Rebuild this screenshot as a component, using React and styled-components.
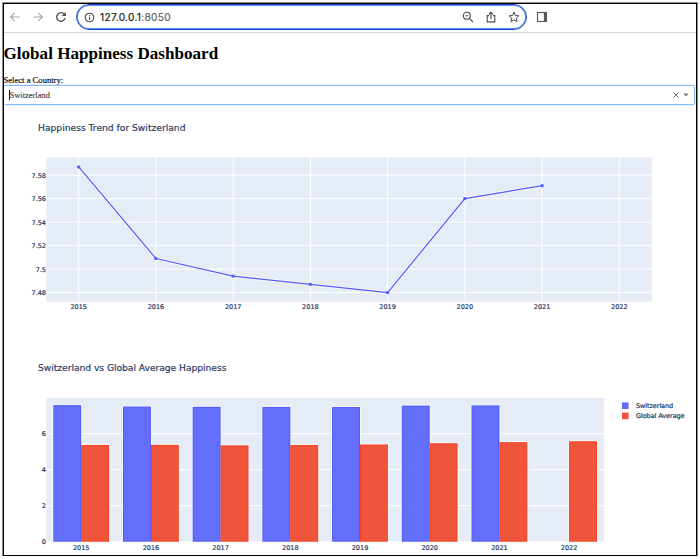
import React from 'react';
import styled, { createGlobalStyle } from 'styled-components';

const GlobalStyle = createGlobalStyle`
  body {
    margin: 0;
    background: #fdfdfd;
  }
`

const Frame = styled.div`
  box-sizing: border-box;
  display: flex;
  flex-direction: column;
  width: 694px;
  height: 553px;
  margin: 3px 0 0 3px;
  border: 1px solid #000;
  box-shadow: 0 0 0 1px #8c8c8c;
  background: #fff;
  overflow: hidden;
`

const Page = styled.div`
  display: flow-root;
`

const Toolbar = styled.div`
  box-sizing: border-box;
  display: flex;
  align-items: flex-start;
  flex: none;
  height: 29px;
  border-bottom: 1px solid #d6d8da;
`

const NavButtons = styled.div`
  display: flex;
  align-items: center;
  gap: 10.9px;
  height: 26px;
  width: 67px;
  padding-left: 5px;
`

const AddressBar = styled.div`
  box-sizing: border-box;
  display: flex;
  align-items: center;
  width: 451px;
  height: 26px;
  padding: 0 6px 0 7px;
  border: 1px solid #1a50d0;
  border-radius: 13px;
  box-shadow: inset 0 0 0 1px #5f8bea;
`

const Url = styled.div`
  flex: 1;
  margin-left: 5px;
  font-family: Inter, "Liberation Sans", sans-serif;
  font-size: 10.2px;
  line-height: 14px;
  letter-spacing: 0.28px;
  color: #5c5f63;
  -webkit-text-stroke: 0.2px;

  b {
    font-weight: 400;
    color: #1c1d20;
  }
`

const BarActions = styled.div`
  display: flex;
  align-items: center;
  gap: 10.9px;
`

const SideButton = styled.div`
  display: flex;
  align-items: center;
  height: 26px;
  margin-left: 9px;
`

const Title = styled.h1`
  margin: 11px 0 0 -0.5px;
  font-family: "Liberation Serif", serif;
  font-size: 17.1px;
  line-height: 20px;
  font-weight: bold;
  white-space: nowrap;
  color: #000;
`

const Label = styled.label`
  display: block;
  margin: 11px 0 0 -0.5px;
  font-family: "Liberation Serif", serif;
  font-size: 8.6px;
  line-height: 10px;
  color: #000;
  -webkit-text-stroke: 0.15px;
`

const Select = styled.div`
  box-sizing: border-box;
  display: flex;
  align-items: center;
  width: 691px;
  height: 20px;
  padding: 0 5px;
  border: 1px solid #85bafa;
  border-left: none;
  border-radius: 2px;
  box-shadow: 0 0 0 0.5px #d4e7fd;
`

const SelectValue = styled.div`
  flex: 1;
  display: flex;
  align-items: center;
  padding-bottom: 1px;
  font-family: "Liberation Serif", serif;
  font-size: 8.5px;
  color: #333;
  -webkit-text-stroke: 0.1px;
`

const Caret = styled.span`
  width: 1px;
  height: 10px;
  margin-right: -0.6px;
  background: #222;
`

const SelectIcons = styled.div`
  display: flex;
  align-items: center;
  gap: 4px;
`

const Chart = styled.svg`
  display: block;
  flex: none;
`

const ChartText = styled.text`
  font-family: "DejaVu Sans", Verdana, sans-serif;
  font-size: ${props => props.$size || 6.5}px;
  fill: #1e3560;
  stroke: #1e3560;
  stroke-width: ${props => props.$stroke || 0.2}px;
`

const years = [2015, 2016, 2017, 2018, 2019, 2020, 2021, 2022];
const country = [7.587, 7.509, 7.494, 7.487, 7.48, 7.56, 7.571];
const average = [5.37, 5.38, 5.35, 5.37, 5.4, 5.47, 5.53, 5.58];

const Icon = ({ size = 12, color = '#47494d', width = 1.1, children }) => (
  <svg width={size} height={size} viewBox="0 0 12 12" fill="none" stroke={color} strokeWidth={width}>
    {children}
  </svg>
)

const Browser = () => (
  <Toolbar>
    <NavButtons>
      <Icon color="#a3a5a8"><path d="M10.6 6H1.8M5.8 1.8L1.6 6l4.2 4.2" /></Icon>
      <Icon color="#a3a5a8"><path d="M1.4 6h8.8M6.2 1.8L10.4 6l-4.2 4.2" /></Icon>
      <Icon width={1.3}>
        <path d="M10.1 7.3A4.3 4.3 0 1 1 9.3 3.2L10.3 4.3" />
        <path d="M10.9 1.1V5.1H6.9z" fill="#47494d" stroke="none" />
      </Icon>
    </NavButtons>
    <AddressBar>
      <Icon size={11} width={1.2}>
        <circle cx="6" cy="6" r="4.7" />
        <path d="M6 5.3V8.7M6 3.2V4.4" />
      </Icon>
      <Url><b>127.0.0.1</b>:8050</Url>
      <BarActions>
        <Icon>
          <circle cx="4.8" cy="4.8" r="3.5" />
          <path d="M3.3 4.8h3M7.4 7.4L11 11" />
        </Icon>
        <Icon>
          <path d="M4 4.6H2.2V10.9H9.8V4.6H8M6 7.9V1.5M3.9 3.4L6 1.3l2.1 2.1" />
        </Icon>
        <Icon width={1}>
          <path d="M6 1.2L7.35 4.5l3.6.3-2.7 2.35.83 3.5L6 8.75 2.92 10.65l.83-3.5L1.05 4.8l3.6-.3z" />
        </Icon>
      </BarActions>
    </AddressBar>
    <SideButton>
      <Icon color="#55585e">
        <rect x="1.5" y="1.5" width="9" height="9" />
        <path d="M7.9 1h3.1v10H7.9z" fill="#55585e" stroke="none" />
      </Icon>
    </SideButton>
  </Toolbar>
)

const TrendChart = () => {
  const x = i => 74.7 + i * 77.23;
  const y = v => 188.6 - (v - 7.48) * 1175;
  const points = country.map((v, i) => `${x(i)},${y(v)}`).join(' ');
  return (
    <Chart width="692" height="239" viewBox="0 1 692 239">
      <ChartText $size={9.2} $stroke={0.15} x="34" y="26.5" textLength="147.5">Happiness Trend for Switzerland</ChartText>
      <rect x="42.3" y="53.4" width="605.6" height="144.2" fill="#e5ecf6" />
      {years.map((year, i) => (
        <g key={year}>
          <line x1={x(i)} x2={x(i)} y1="53.4" y2="197.6" stroke="#fff" strokeWidth="1" />
          <ChartText x={x(i)} y="205.1" textAnchor="middle">{year}</ChartText>
        </g>
      ))}
      {[7.58, 7.56, 7.54, 7.52, 7.5, 7.48].map(v => (
        <g key={v}>
          <line x1="42.3" x2="647.9" y1={y(v)} y2={y(v)} stroke="#fff" strokeWidth="1" />
          <ChartText x="42" y={y(v) + 2.4} textAnchor="end">{v}</ChartText>
        </g>
      ))}
      <polyline points={points} fill="none" stroke="#f5f7fb" strokeWidth="3" />
      <polyline points={points} fill="none" stroke="#535dfb" strokeWidth="1.25" />
      {country.map((v, i) => <circle key={i} cx={x(i)} cy={y(v)} r="1.7" fill="#535dfb" />)}
    </Chart>
  )
}

const BarHalo = ({ x, top }) => (
  <rect x={x - 0.9} y={top - 0.9} width="29.7" height={198.6 - top} fill="#f8fbfc" />
)

const Bar = ({ x, top, color, edge }) => (
  <g>
    <rect x={x} y={top} width="27.9" height={197.7 - top} fill={edge} />
    <rect x={x + 0.8} y={top + 0.8} width="26.3" height={197.7 - top - 1.6} fill={color} />
  </g>
)

const CompareChart = () => {
  const x = i => 77.2 + i * 69.7;
  const y = v => 197.7 - v * 18;
  return (
    <Chart width="692" height="210" viewBox="0 0 692 210">
      <ChartText $size={9.2} $stroke={0.15} x="34" y="27" textLength="188.5">Switzerland vs Global Average Happiness</ChartText>
      <rect x="42.3" y="54" width="557.7" height="143.7" fill="#e5ecf6" />
      {[0, 2, 4, 6].map(v => (
        <g key={v}>
          <line x1="42.3" x2="600" y1={y(v)} y2={y(v)} stroke="#fff" strokeWidth="1" />
          <ChartText x="42" y={y(v) + 2.4} textAnchor="end">{v}</ChartText>
        </g>
      ))}
      {years.map((year, i) => (
        <g key={year}>
          {country[i] && <BarHalo x={x(i) - 27.9} top={y(country[i])} />}
          <BarHalo x={x(i)} top={y(average[i])} />
          {country[i] && <Bar x={x(i) - 27.9} top={y(country[i])} color="#636efa" edge="#4b55fb" />}
          <Bar x={x(i)} top={y(average[i])} color="#ef553b" edge="#f53c1c" />
          <ChartText x={x(i)} y="205.6" textAnchor="middle">{year}</ChartText>
        </g>
      ))}
      <rect x="618" y="58.4" width="6.6" height="6.6" fill="#636efa" />
      <ChartText x="632" y="64.2" textLength="37.2">Switzerland</ChartText>
      <rect x="618" y="68.6" width="6.6" height="6.6" fill="#ef553b" />
      <ChartText x="632" y="74.2" textLength="48.6">Global Average</ChartText>
    </Chart>
  )
}

const App = () => (
  <Page>
    <GlobalStyle />
    <Frame>
      <Browser />
      <Title>Global Happiness Dashboard</Title>
      <Label>Select a Country:</Label>
      <Select>
        <SelectValue><Caret />Switzerland</SelectValue>
        <SelectIcons>
          <svg width="6" height="6" viewBox="0 0 6 6" stroke="#777" strokeWidth="1">
            <path d="M0.5 0.5L5.5 5.5M5.5 0.5L0.5 5.5" />
          </svg>
          <svg width="6" height="4" viewBox="0 0 6 4">
            <path d="M0.3 0.5h5.4L3 3.4z" fill="#777" />
          </svg>
        </SelectIcons>
      </Select>
      <TrendChart />
      <CompareChart />
    </Frame>
  </Page>
)

export default App;
